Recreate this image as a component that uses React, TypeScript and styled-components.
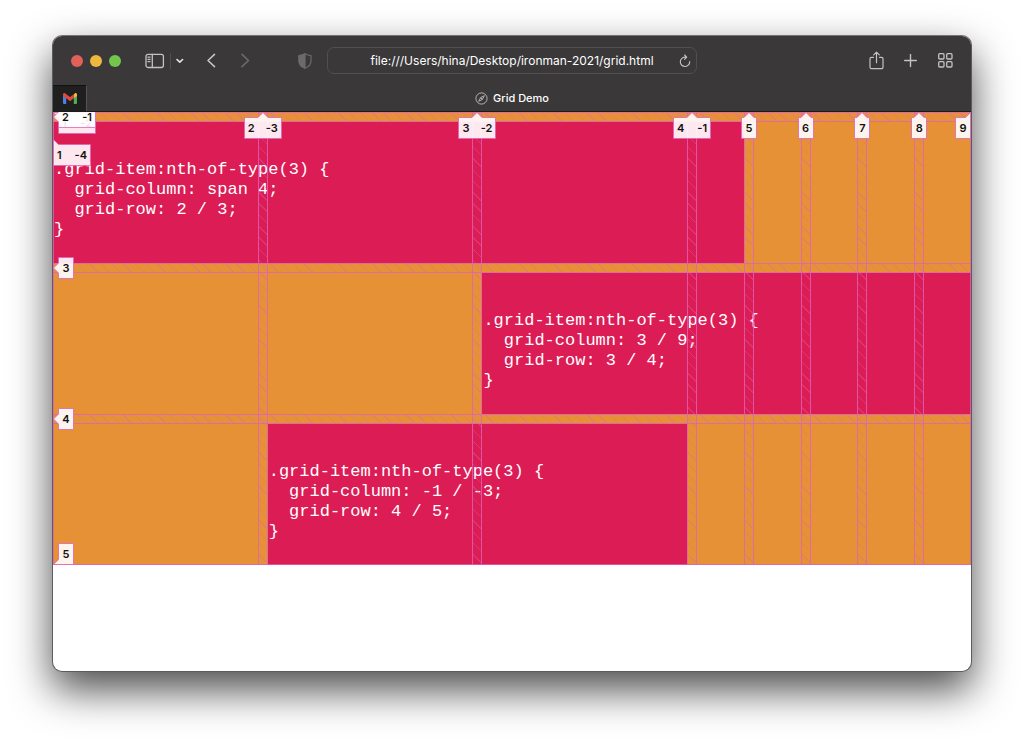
import React from 'react';
import styled, { createGlobalStyle, css } from 'styled-components';

const GlobalStyle = createGlobalStyle`
  *, *::before, *::after {
    box-sizing: border-box;
  }
  body {
    margin: 0;
    background: #fff;
    font-family: Inter, "Liberation Sans", sans-serif;
  }
`;

const line = 'rgba(222, 98, 184, 0.8)';

const Desktop = styled.div`
  display: flex;
  min-height: 100vh;
  padding: 35px 52px 69px;
`;

const Window = styled.div`
  flex: 1;
  min-width: 0;
  display: flex;
  flex-direction: column;
  overflow: hidden;
  border: 1px solid #5c5c5c;
  border-top-color: #747474;
  border-radius: 10px;
  background: #fff;
  box-shadow: 0 18px 40px rgba(0, 0, 0, 0.7);
`;

const Chrome = styled.header`
  background: #3a3839;
  border-bottom: 1px solid #1c1b1b;
`;

const Toolbar = styled.div`
  display: grid;
  grid-template-columns: 1fr 370px 1fr;
  align-items: center;
  height: 49px;
`;

const ToolGroup = styled.div`
  display: flex;
  align-items: center;
`;

const LeftTools = styled(ToolGroup)`
  padding: 0 15px 0 18px;
`;

const RightTools = styled(ToolGroup)`
  justify-content: flex-end;
  gap: 19px;
  padding-right: 18px;
`;

const Lights = styled.div`
  display: flex;
  gap: 7px;
  margin-right: 24px;
`;

const Light = styled.button<{ $color: string }>`
  width: 12px;
  height: 12px;
  padding: 0;
  border: 0;
  border-radius: 50%;
  background: ${({ $color }) => $color};
`;

const IconButton = styled.button<{ $dim?: boolean }>`
  display: flex;
  padding: 0;
  border: 0;
  background: none;
  color: ${({ $dim }) => ($dim ? '#6c6a6b' : '#c4c3c3')};

  svg {
    display: block;
    fill: none;
    stroke: currentColor;
    stroke-linecap: round;
    stroke-linejoin: round;
  }
`;

const MenuButton = styled(IconButton)`
  margin: 0 21px 0 4px;
  color: #e8e8e8;
`;

const BackButton = styled(IconButton)`
  margin-right: 24px;
`;

const ShieldButton = styled(IconButton)`
  margin-left: auto;
`;

const Divider = styled.span`
  width: 1px;
  height: 16px;
  margin-left: 5px;
  background: #504e4f;
`;

const AddressBar = styled.div`
  display: flex;
  align-items: center;
  height: 27px;
  padding: 0 5px 0 17px;
  border: 1px solid #525051;
  border-radius: 7px;
`;

const Address = styled.input`
  flex: 1;
  min-width: 0;
  padding: 0;
  border: 0;
  outline: 0;
  background: none;
  color: #fff;
  font: 400 12px/18px Inter, "Liberation Sans", sans-serif;
  text-align: center;
`;

const TabBar = styled.nav`
  display: grid;
  grid-template-columns: 1fr auto 1fr;
  height: 26px;
`;

const PinnedTab = styled.a`
  display: flex;
  align-items: center;
  justify-content: center;
  width: 34px;
  border-top: 1px solid #111;
  border-right: 1px solid #555354;
  background: #201f20;
`;

const Tab = styled.a`
  display: flex;
  align-items: center;
  gap: 5px;
  color: #fff;
  font-size: 11px;
  font-weight: 500;
  line-height: 16px;
  text-decoration: none;
`;

const Viewport = styled.main`
  position: relative;
  flex: 1;
  overflow: hidden;
`;

const Board = styled.div`
  position: relative;
  overflow: hidden;
`;

const Grid = styled.div`
  display: grid;
  grid-template-columns: repeat(3, minmax(0, 35fr)) repeat(5, minmax(0, 8fr));
  grid-template-rows: 0 repeat(3, 141px);
  gap: 10px;
  background: #e69136;
`;

const GridItem = styled.pre<{ $column: string; $row: string }>`
  grid-column: ${({ $column }) => $column};
  grid-row: ${({ $row }) => $row};
  margin: 0;
  padding: 38px 0 0 1px;
  background: #dc1c55;
  color: #fff;
  font: 500 17px/20px "Liberation Mono", "Courier New", monospace;
`;

// Inspector layer drawn over the board, gaps are real tracks here
const Overlay = styled.div`
  position: absolute;
  inset: 0;
  display: grid;
  grid-template-columns:
    minmax(0, 35fr) 10px minmax(0, 35fr) 10px minmax(0, 35fr) 10px
    minmax(0, 8fr) 10px minmax(0, 8fr) 10px minmax(0, 8fr) 10px
    minmax(0, 8fr) 10px minmax(0, 8fr);
  grid-template-rows: 10px 141px 10px 141px 10px 141px;
  box-shadow:
    inset 1px 0 ${line},
    inset -1px -1px ${line};
`;

const Gap = styled.div`
  border: solid ${line};
  background: repeating-linear-gradient(
    45deg,
    transparent 0 7px,
    rgba(222, 98, 184, 0.35) 7px 8px
  );
`;

const ColumnGap = styled(Gap)<{ $track: number }>`
  grid-column: ${({ $track }) => $track};
  grid-row: 1 / -1;
  border-width: 0 1px;
`;

const RowGap = styled(Gap)<{ $track: number }>`
  grid-column: 1 / -1;
  grid-row: ${({ $track }) => $track};
  border-width: 1px 0;
`;

const TagCell = styled.div<{ $column: string; $row: string }>`
  position: relative;
  grid-column: ${({ $column }) => $column};
  grid-row: ${({ $row }) => $row};
`;

type Pointer = 'up' | 'left' | 'upLeft' | 'upRight' | 'downLeft' | 'rowStart';

const placement = {
  up: css`
    top: 0;
    left: 50%;
    transform: translateX(-50%);
    padding-top: 5px;
  `,
  left: css`
    top: 50%;
    left: 0;
    transform: translateY(-50%);
    padding-left: 5px;
  `,
  upLeft: css`
    top: 17px;
    left: 0;
    padding-top: 5px;
  `,
  upRight: css`
    top: 0;
    right: 0;
    padding-top: 5px;
  `,
  downLeft: css`
    bottom: 0;
    left: 0;
    padding-left: 5px;
  `,
  rowStart: css`
    top: 0;
    left: 0;
    padding-left: 5px;
  `,
};

const TagBox = styled.div<{ $pointer: Pointer }>`
  position: absolute;
  ${({ $pointer }) => placement[$pointer]}

  svg {
    position: absolute;
    inset: 0;
    fill: rgba(255, 255, 255, 0.9);
    stroke: ${line};
  }
`;

const TagText = styled.div<{ $pair: boolean }>`
  position: relative;
  display: flex;
  justify-content: ${({ $pair }) => ($pair ? 'space-between' : 'center')};
  width: ${({ $pair }) => ($pair ? 38 : 16)}px;
  height: 22px;
  padding: 0 4px;
  color: #111;
  font-size: 11px;
  font-weight: 600;
  line-height: 22px;
`;

const tagPath = (pointer: Pointer, w: number) => {
  const c = w / 2;
  const r = w - 0.5;
  switch (pointer) {
    case 'up':
      return `M.5 5.5H${c - 5}L${c} .5L${c + 5} 5.5H${r}V26.5H.5Z`;
    case 'upLeft':
      return `M.5 .5L5.5 5.5H${r}V26.5H.5Z`;
    case 'upRight':
      return `M${r} .5L${r - 5} 5.5H.5V26.5H${r}Z`;
    case 'left':
      return `M5.5 .5H${r + 5}V21.5H5.5V16L.5 11L5.5 6Z`;
    case 'downLeft':
      return `M5.5 .5H${r + 5}V21.5H.5L5.5 16.5Z`;
    default:
      return `M.5 .5H${r + 5}V21.5H5.5V5.5Z`;
  }
};

interface TagProps {
  pointer: Pointer;
  labels: string[];
}

const Tag: React.FC<TagProps> = ({ pointer, labels }) => {
  const pair = labels.length > 1;
  const width = pair ? 38 : 16;
  const sideways = pointer === 'left' || pointer === 'downLeft' || pointer === 'rowStart';
  return (
    <TagBox $pointer={pointer}>
      <svg width={sideways ? width + 5 : width} height={sideways ? 22 : 27} aria-hidden="true">
        <path d={tagPath(pointer, width)} />
      </svg>
      <TagText $pair={pair}>
        {labels.map((label) => (
          <span key={label}>{label}</span>
        ))}
      </TagText>
    </TagBox>
  );
};

const items = [
  {
    column: 'span 4',
    row: '2 / 3',
    code: '.grid-item:nth-of-type(3) {\n  grid-column: span 4;\n  grid-row: 2 / 3;\n}',
  },
  {
    column: '3 / 9',
    row: '3 / 4',
    code: '.grid-item:nth-of-type(3) {\n  grid-column: 3 / 9;\n  grid-row: 3 / 4;\n}',
  },
  {
    column: '2 / 4',
    row: '4 / 5',
    code: '.grid-item:nth-of-type(3) {\n  grid-column: -1 / -3;\n  grid-row: 4 / 5;\n}',
  },
];

const columnLines = [['2', '-3'], ['3', '-2'], ['4', '-1'], ['5'], ['6'], ['7'], ['8']];

const BrowserChrome: React.FC = () => (
  <Chrome>
    <Toolbar>
      <LeftTools>
        <Lights>
          <Light $color="#e0605a" aria-label="Close" />
          <Light $color="#eeb83f" aria-label="Minimize" />
          <Light $color="#73c64c" aria-label="Zoom" />
        </Lights>
        <IconButton aria-label="Sidebar">
          <svg width="20" height="16" viewBox="0 0 20 16" strokeWidth="1.3">
            <rect x="1" y="1.3" width="17.4" height="13.2" rx="2" />
            <path d="M7.3 1.5v13M3 4.2h2M3 6.4h2M3 8.6h2" />
          </svg>
        </IconButton>
        <Divider />
        <MenuButton aria-label="Tab groups">
          <svg width="10" height="10" viewBox="0 0 10 10" strokeWidth="1.6">
            <path d="M2 3.500L4.800 6.200l2.800-2.700" />
          </svg>
        </MenuButton>
        <BackButton aria-label="Back">
          <svg width="10" height="16" viewBox="0 0 10 16" strokeWidth="1.6">
            <path d="M8.500 1.300L2 7.500l6.500 6.200" />
          </svg>
        </BackButton>
        <IconButton $dim aria-label="Forward">
          <svg width="10" height="16" viewBox="0 0 10 16" strokeWidth="1.6">
            <path d="M2 1.300L8.500 7.500l-6.500 6.200" />
          </svg>
        </IconButton>
        <ShieldButton $dim aria-label="Privacy report">
          <svg width="14" height="16" viewBox="0 0 14 16" strokeWidth="1.2">
            <path d="M7 .8c2 1.300 3.800 1.700 6 1.800v5.400c0 3.400-2.500 5.800-6 7.200-3.500-1.400-6-3.800-6-7.200V2.600C3.200 2.500 5 2.100 7 .8z" />
            <path d="M7 .8v14.400C3.500 13.800 1 11.400 1 8V2.600C3.200 2.500 5 2.100 7 .8z" fill="currentColor" />
          </svg>
        </ShieldButton>
      </LeftTools>
      <AddressBar>
        <Address
          type="text"
          aria-label="Address"
          defaultValue="file:///Users/hina/Desktop/ironman-2021/grid.html"
        />
        <IconButton aria-label="Reload">
          <svg width="12" height="14" viewBox="0 0 12 14" strokeWidth="1.1">
            <path d="M10.700 7.500A4.700 4.700 0 1 1 6 3.100h1.400M5.600 1l2.100 2.100-2.100 2.200" />
          </svg>
        </IconButton>
      </AddressBar>
      <RightTools>
        <IconButton aria-label="Share">
          <svg width="16" height="20" viewBox="0 0 16 20" strokeWidth="1.2">
            <path d="M4.500 6.300H2.500A1.500 1.500 0 0 0 1 7.800v8.400A1.500 1.500 0 0 0 2.500 17.700h10a1.500 1.500 0 0 0 1.500-1.500V7.800A1.500 1.500 0 0 0 12.500 6.300h-2M7.500 11.700V1.300M4.700 3.900L7.500 1.100l2.800 2.800" />
          </svg>
        </IconButton>
        <IconButton aria-label="New tab">
          <svg width="14" height="14" viewBox="0 0 14 14" strokeWidth="1.4">
            <path d="M6.500 .5v12M.7 6.500h11.600" />
          </svg>
        </IconButton>
        <IconButton aria-label="Tab overview">
          <svg width="16" height="16" viewBox="0 0 16 16" strokeWidth="1.3">
            <rect x="1.700" y="0.700" width="5.300" height="5.300" rx="1" />
            <rect x="9.700" y="0.700" width="5.300" height="5.300" rx="1" />
            <rect x="1.700" y="8.700" width="5.300" height="5.300" rx="1" />
            <rect x="9.700" y="8.700" width="5.300" height="5.300" rx="1" />
          </svg>
        </IconButton>
      </RightTools>
    </Toolbar>
    <TabBar>
      <PinnedTab href="#mail" aria-label="Gmail">
        <svg width="14" height="11" viewBox="0 0 14 11">
          <path d="M0 2.500l3.200 2.300V11H1a1 1 0 0 1-1-1z" fill="#4c7fe8" />
          <path d="M14 2.500l-3.200 2.300V11H13a1 1 0 0 0 1-1z" fill="#4fae55" />
          <path d="M10.800 1.200l1-.8C12.800-.3 14 .4 14 1.600v1.300l-3.200 2.400z" fill="#f2bd3a" />
          <path d="M0 2.900V1.600C0 .4 1.200-.3 2.200.4L7 4l3.800-2.800v4.100L7 8.200 3.200 5.300z" fill="#dd4b3e" />
        </svg>
      </PinnedTab>
      <Tab href="#grid-demo">
        <svg width="13" height="13" viewBox="0 0 13 13" fill="none" stroke="#b5b4b4">
          <circle cx="6.500" cy="6.500" r="5.600" />
          <path d="M9.300 3.700L7.400 7.400 3.700 9.300l1.900-3.700z" />
          <path d="M5.600 5.600l1.800 1.800" />
        </svg>
        Grid Demo
      </Tab>
    </TabBar>
  </Chrome>
);

const GridInspector: React.FC = () => (
  <Overlay>
    {[1, 3, 5].map((track) => (
      <RowGap key={track} $track={track} />
    ))}
    {columnLines.map((labels, i) => (
      <ColumnGap key={labels[0]} $track={(i + 1) * 2} />
    ))}
    {columnLines.map((labels, i) => (
      <TagCell key={labels[0]} $column={`${(i + 1) * 2}`} $row="1 / -1">
        <Tag pointer="up" labels={labels} />
      </TagCell>
    ))}
    <TagCell $column="15" $row="1">
      <Tag pointer="upRight" labels={['9']} />
    </TagCell>
    <TagCell $column="1" $row="1">
      <Tag pointer="rowStart" labels={['1', '-2']} />
    </TagCell>
    <TagCell $column="1" $row="1">
      <Tag pointer="left" labels={['2', '-1']} />
    </TagCell>
    <TagCell $column="1" $row="2">
      <Tag pointer="upLeft" labels={['1', '-4']} />
    </TagCell>
    <TagCell $column="1" $row="3">
      <Tag pointer="left" labels={['3']} />
    </TagCell>
    <TagCell $column="1" $row="5">
      <Tag pointer="left" labels={['4']} />
    </TagCell>
    <TagCell $column="1" $row="6">
      <Tag pointer="downLeft" labels={['5']} />
    </TagCell>
  </Overlay>
);

const App: React.FC = () => {
  return (
    <>
      <GlobalStyle />
      <Desktop>
        <Window>
          <BrowserChrome />
          <Viewport>
            <Board>
              <Grid>
                {items.map((item) => (
                  <GridItem key={item.row} $column={item.column} $row={item.row}>
                    {item.code}
                  </GridItem>
                ))}
              </Grid>
              <GridInspector />
            </Board>
          </Viewport>
        </Window>
      </Desktop>
    </>
  );
};

export default App;
